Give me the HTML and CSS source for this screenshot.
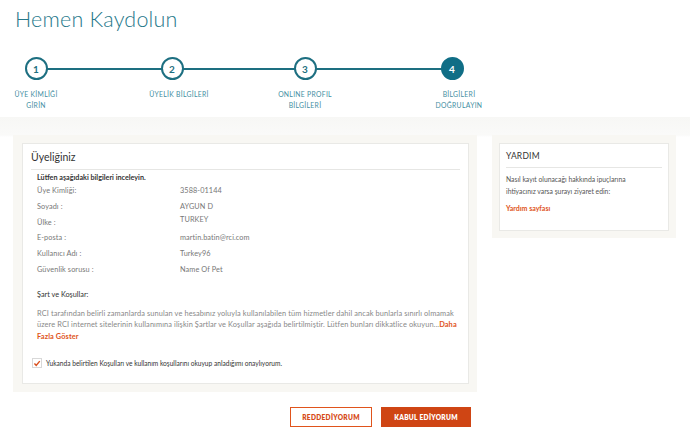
FILE: index.html
```html
<!DOCTYPE html>
<html lang="tr">
<head>
<meta charset="utf-8">
<link rel="stylesheet" href="styles.css">
</head>
<body>
<header class="top">
  <h1 class="title">Hemen Kaydolun</h1>
  <div class="steps">
    <div class="step"><span class="circle">1</span><span class="step-label">ÜYE KİMLİĞİ<br>GİRİN</span></div>
    <div class="step"><span class="circle">2</span><span class="step-label shift">ÜYELİK BİLGİLERİ</span></div>
    <div class="step"><span class="circle">3</span><span class="step-label">ONLINE PROFIL<br>BİLGİLERİ</span></div>
    <div class="step"><span class="circle active">4</span><span class="step-label shift">BİLGİLERİ<br>DOĞRULAYIN</span></div>
  </div>
</header>
<main class="band">
  <div class="layout">
    <div class="main-col">
      <section class="panel">
        <div class="card">
          <h2 class="card-title">Üyeliğiniz</h2>
          <div class="card-body">
            <p class="intro">Lütfen aşağıdaki bilgileri inceleyin.</p>
            <dl class="info">
              <dt>Üye Kimliği:</dt><dd>3588-01144</dd>
              <dt>Soyadı :</dt><dd>AYGUN D</dd>
              <dt>Ülke :</dt><dd class="up">TURKEY</dd>
              <dt>E-posta :</dt><dd>martin.batin@rci.com</dd>
              <dt>Kullanıcı Adı :</dt><dd>Turkey96</dd>
              <dt>Güvenlik sorusu :</dt><dd>Name Of Pet</dd>
            </dl>
            <h3 class="terms-title">Şart ve Koşullar:</h3>
            <p class="terms">RCI tarafından belirli zamanlarda sunulan ve hesabınız yoluyla kullanılabilen tüm hizmetler dahil ancak bunlarla sınırlı olmamak<br>üzere RCI internet sitelerinin kullanımına ilişkin Şartlar ve Koşullar aşağıda belirtilmiştir. Lütfen bunları dikkatlice okuyun...<a class="more" href="#">Daha<br>Fazla Göster</a></p>
          </div>
          <label class="agree">
            <span class="checkbox"><svg width="9" height="9" viewBox="0 0 9 9"><path d="M1.6 4.6 L3.6 6.6 L7.6 1.8" fill="none" stroke="#d9501e" stroke-width="1.6"/></svg></span>
            <span>Yukanda belirtilen Koşulları ve kullanım koşullarını okuyup anladığımı onaylıyorum.</span>
          </label>
        </div>
      </section>
      <div class="actions">
        <button class="btn btn-outline">REDDEDİYORUM</button>
        <button class="btn btn-fill">KABUL EDİYORUM</button>
      </div>
    </div>
    <aside class="side panel">
      <div class="card side-card">
        <h2 class="side-title">YARDIM</h2>
        <p class="side-text">Nasıl kayıt olunacağı hakkında ipuçlarına<br>ihtiyacınız varsa şurayı ziyaret edin:</p>
        <a class="side-link" href="#">Yardım sayfası</a>
      </div>
    </aside>
  </div>
</main>
</body>
</html>
```

FILE: styles.css
```css
* { box-sizing: border-box; }
html, body { margin: 0; padding: 0; background: #fff; }
body { font-family: Lato, "Open Sans", sans-serif; color: #555; width: 690px; height: 440px; overflow: hidden; }

.top { padding: 5px 0 0 0; height: 117px; }
.title { margin: 0 0 0 15px; font-weight: 300; font-size: 21.5px; line-height: 28px; color: #26788a; letter-spacing: 0.2px; }

.steps { position: relative; display: grid; grid-template-columns: 136px 133px 147px 60px; margin: 24px 0 0 6px; }
.steps::before { content: ""; position: absolute; left: 30px; width: 416px; top: 11px; height: 2px; background: #1d6f81; }
.step { width: 60px; display: flex; flex-direction: column; align-items: center; position: relative; }
.circle { width: 23px; height: 23px; border-radius: 50%; border: 2px solid #1d6f81; background: #fff; color: #1d6f81; font-size: 10px; font-weight: 700; display: flex; align-items: center; justify-content: center; }
.circle.active { background: #106e86; border-color: #106e86; color: #fff; }
.step-label { margin-top: 9px; font-size: 6.8px; font-weight: 400; line-height: 11px; letter-spacing: 0.3px; color: #3f8ea2; text-align: center; white-space: nowrap; }
.step-label.shift { transform: translateX(7px); }

.band { background: linear-gradient(#f7f7f5, #fafaf9 18px, #fff 20px); padding-top: 18px; height: 323px; }
.layout { display: flex; gap: 15px; padding-left: 13px; }
.main-col { width: 464px; }
.panel { background: #f8f7f3; padding: 8px 8px 8px 9px; }
.card { background: #fff; border: 1px solid #e9e9e6; }
.main-col .card { padding: 6px 8px 10px 8px; height: 241px; }
.card-title { margin: 0; font-size: 10.5px; font-weight: 400; color: #333; padding: 1px 0 6px 0; border-bottom: 1px solid #e6e6e4; }
.card-body { padding: 0 6px; }
.intro { margin: 3px 0 4px 0; font-size: 7.2px; font-weight: 700; color: #333; line-height: 9px; }
.info { display: grid; grid-template-columns: 143px 1fr; margin: 0; font-size: 7.3px; letter-spacing: 0.1px; line-height: 9px; color: #777; row-gap: 6.8px; }
.info dt, .info dd { margin: 0; }
.info dd.up { transform: translateY(-3px); }
.terms-title { margin: 16px 0 0 0; font-size: 7.3px; font-weight: 400; color: #333; }
.terms { margin: 9px 0 0 0; font-size: 7.4px; letter-spacing: 0.1px; line-height: 11.5px; color: #888; white-space: nowrap; }
.more { color: #e0541c; font-weight: 700; text-decoration: none; }
.agree { display: flex; align-items: center; gap: 4px; margin: 16px 0 0 1px; font-size: 6.6px; color: #333; }
.checkbox { width: 10px; height: 10px; border: 1px solid #d8d8d8; background: #fff; display: flex; align-items: center; justify-content: center; }

.actions { display: flex; justify-content: flex-end; gap: 9px; margin-top: 15px; padding-right: 6px; }
.btn { font-family: Lato, sans-serif; font-size: 6.6px; font-weight: 800; letter-spacing: 0.3px; height: 20px; padding: 0; cursor: pointer; }
.btn-outline { width: 82px; background: #fff; border: 1.5px solid #e0541c; color: #d64b18; }
.btn-fill { width: 90px; background: #cf4514; border: 1px solid #cf4514; color: #fff; }

.side { width: 184px; align-self: flex-start; padding: 8px 7px 7px 7px; }
.side-card { padding: 6px 6px 14px 6px; height: 88px; }
.side-title { margin: 0; font-size: 8.5px; font-weight: 400; color: #333; padding: 1px 0 6px 0; border-bottom: 1px solid #e6e6e4; letter-spacing: 0.2px; }
.side-text { margin: 5px 0 0 0; font-size: 6.8px; line-height: 12px; color: #555; }
.side-link { display: block; margin-top: 7px; font-size: 7px; font-weight: 700; color: #e0541c; text-decoration: none; }
```
